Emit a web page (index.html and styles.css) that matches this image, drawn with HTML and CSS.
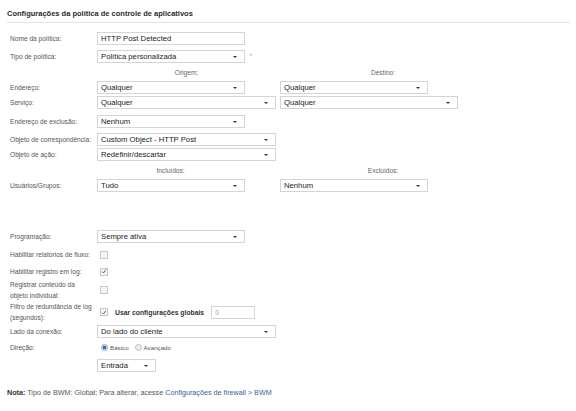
FILE: index.html
```html
<!DOCTYPE html>
<html>
<head>
<meta charset="utf-8">
<link rel="stylesheet" href="styles.css">
</head>
<body>
<div class="page">
  <div class="title">Configurações da política de controle de aplicativos</div>
  <div class="form">
    <div class="row r-nome">
      <div class="lbl">Nome da política:</div>
      <div class="input w148">HTTP Post Detected</div>
    </div>
    <div class="row r-tipo">
      <div class="lbl">Tipo de política:</div>
      <div class="select w148">Política personalizada</div>
      <span class="tick">'</span>
    </div>
    <div class="row head r-h1">
      <div class="lbl"></div>
      <div class="cell-a"><span class="hd hd-origem">Origem:</span></div>
      <div class="cell-b"><span class="hd hd-destino">Destino:</span></div>
    </div>
    <div class="row r-end">
      <div class="lbl">Endereço:</div>
      <div class="cell-a"><div class="select w148">Qualquer</div></div>
      <div class="cell-b"><div class="select w148">Qualquer</div></div>
    </div>
    <div class="row r-serv">
      <div class="lbl">Serviço:</div>
      <div class="cell-a"><div class="select w179">Qualquer</div></div>
      <div class="cell-b"><div class="select w178">Qualquer</div></div>
    </div>
    <div class="row r-excl">
      <div class="lbl">Endereço de exclusão:</div>
      <div class="select w148">Nenhum</div>
    </div>
    <div class="row r-obj">
      <div class="lbl">Objeto de correspondência:</div>
      <div class="select w179">Custom Object - HTTP Post</div>
    </div>
    <div class="row r-acao">
      <div class="lbl">Objeto de ação:</div>
      <div class="select w179">Redefinir/descartar</div>
    </div>
    <div class="row head r-h2">
      <div class="lbl"></div>
      <div class="cell-a"><span class="hd hd-incl">Incluídos:</span></div>
      <div class="cell-b"><span class="hd hd-destino">Excluídos:</span></div>
    </div>
    <div class="row r-users">
      <div class="lbl">Usuários/Grupos:</div>
      <div class="cell-a"><div class="select w148">Tudo</div></div>
      <div class="cell-b"><div class="select w148">Nenhum</div></div>
    </div>
    <div class="row r-prog">
      <div class="lbl">Programação:</div>
      <div class="select w148">Sempre ativa</div>
    </div>
    <div class="row r-fluxo">
      <div class="lbl">Habilitar relatórios de fluxo:</div>
      <span class="cb"></span>
    </div>
    <div class="row r-log">
      <div class="lbl">Habilitar registro em log:</div>
      <span class="cb checked"><svg viewBox="0 0 8 8" width="7" height="7"><path d="M1.5 4.2 L3.3 6 L6.6 1.4" fill="none" stroke="#2b5fb0" stroke-width="1.2"/></svg></span>
    </div>
    <div class="row r-conteudo">
      <div class="lbl">Registrar conteúdo da<br>objeto individual:</div>
      <span class="cb"></span>
    </div>
    <div class="row r-filtro">
      <div class="lbl">Filtro de redundância de log<br>(segundos):</div>
      <span class="cb checked"><svg viewBox="0 0 8 8" width="7" height="7"><path d="M1.5 4.2 L3.3 6 L6.6 1.4" fill="none" stroke="#2b5fb0" stroke-width="1.2"/></svg></span>
      <span class="global">Usar configurações globais</span>
      <div class="input small">0</div>
    </div>
    <div class="row r-lado">
      <div class="lbl">Lado da conexão:</div>
      <div class="select w179">Do lado do cliente</div>
    </div>
    <div class="row r-dir">
      <div class="lbl">Direção:</div>
      <span class="radio on"></span><span class="rtxt">Básico</span>
      <span class="radio"></span><span class="rtxt">Avançado</span>
    </div>
    <div class="row r-entrada">
      <div class="lbl"></div>
      <div class="select w59">Entrada</div>
    </div>
  </div>
  <div class="note"><b>Nota:</b> Tipo de BWM: Global; Para alterar, acesse <span class="link">Configurações de firewall &gt; BWM</span></div>
</div>
</body>
</html>
```
FILE: styles.css
```css
html, body { margin: 0; padding: 0; background: #fff; }
body { font-family: "Liberation Sans", Arial, sans-serif; color: #555; }
.page { padding: 9px 6px 0 7px; width: 563px; }
.title {
  font-size: 7.5px; font-weight: bold; color: #2a2a2a;
  padding-bottom: 4px; border-bottom: 1px solid #e2e2e2;
  line-height: 9px;
}
.form { padding-left: 3px; margin-top: 8px; }
.row { display: flex; align-items: center; }
.lbl { width: 87px; flex: none; font-size: 6.6px; color: #555; line-height: 11px; white-space: nowrap; }
.cell-a { width: 183px; flex: none; }
.cell-b { flex: none; }
.input, .select {
  box-sizing: border-box; height: 13px; border: 1px solid #d4d4d4; background: #fff;
  font-size: 7.7px; color: #222; line-height: 11px; padding-left: 3px; position: relative;
  white-space: nowrap; flex: none;
}
.select::after {
  content: ""; position: absolute; right: 7px; top: 5px;
  border-left: 2px solid transparent; border-right: 2px solid transparent; border-top: 2px solid #333;
}
.w148 { width: 148px; }
.w179 { width: 179px; }
.w178 { width: 178px; }
.w59 { width: 59px; }
.tick { font-size: 8px; color: #333; margin-left: 5px; align-self: flex-start; margin-top: 2px; }
.hd { font-size: 6.6px; color: #666; display: block; }
.hd-origem { text-align: center; width: 179px; }
.hd-incl { text-align: center; width: 147px; }
.hd-destino { text-align: center; width: 206px; }

.r-nome { height: 13px; margin-top: 9px; }
.r-tipo { height: 13px; margin-top: 5px; }
.r-h1 { height: 9px; margin-top: 5px; }
.r-end { height: 13px; margin-top: 4px; }
.r-serv { height: 13px; margin-top: 2px; }
.r-excl { height: 13px; margin-top: 6px; }
.r-obj { height: 13px; margin-top: 5px; }
.r-acao { height: 13px; margin-top: 2px; }
.r-h2 { height: 9px; margin-top: 5px; }
.r-users { height: 13px; margin-top: 4px; }
.r-prog { height: 13px; margin-top: 38px; }
.r-fluxo { height: 11px; margin-top: 6px; }
.r-log { height: 11px; margin-top: 6px; }
.r-conteudo { height: 22px; margin-top: 2px; }
.r-filtro { height: 22px; margin-top: 0; }
.r-lado { height: 13px; margin-top: 2px; }
.r-dir { height: 11px; margin-top: 4px; }
.r-entrada { height: 13px; margin-top: 6px; }

.cb {
  box-sizing: border-box; width: 8px; height: 8px; border: 1px solid #c8c8c8; background: #f4f4f4;
  margin-left: 3px; display: inline-flex; align-items: center; justify-content: center; flex: none;
}
.cb svg { display: block; }
.global { font-size: 6.8px; font-weight: bold; color: #333; margin-left: 7px; }
.input.small { width: 44px; margin-left: 7px; font-size: 6.6px; color: #999; }
.radio {
  box-sizing: border-box; width: 7px; height: 7px; border-radius: 50%; border: 1px solid #bbb;
  background: #eee; flex: none; margin-left: 4px;
}
.radio.on { background: radial-gradient(circle, #2d6fb6 0 1.6px, #cfe0f0 2px); border-color: #8aa6c4; }
.rtxt { font-size: 6.2px; color: #555; margin-left: 2px; margin-right: 2px; }
.note { font-size: 7.2px; color: #555; margin-top: 16px; margin-left: 0; }
.note b { color: #333; }
.link { color: #2f5f9e; }
```
